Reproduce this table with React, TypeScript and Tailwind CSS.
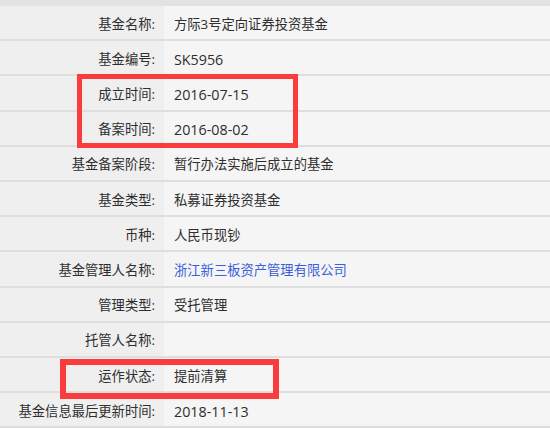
const rows: { label: string; value: string; link?: boolean; latin?: boolean }[] = [
  { label: "基金名称:", value: "方际3号定向证券投资基金" },
  { label: "基金编号:", value: "SK5956", latin: true },
  { label: "成立时间:", value: "2016-07-15", latin: true },
  { label: "备案时间:", value: "2016-08-02", latin: true },
  { label: "基金备案阶段:", value: "暂行办法实施后成立的基金" },
  { label: "基金类型:", value: "私募证券投资基金" },
  { label: "币种:", value: "人民币现钞" },
  { label: "基金管理人名称:", value: "浙江新三板资产管理有限公司", link: true },
  { label: "管理类型:", value: "受托管理" },
  { label: "托管人名称:", value: "" },
  { label: "运作状态:", value: "提前清算" },
  { label: "基金信息最后更新时间:", value: "2018-11-13", latin: true },
];

export default function App() {
  return (
    <div
      className="relative w-[550px] h-[428px] overflow-hidden bg-[#f5f5f5] text-[13.3px] text-[#2e2e2e]"
      style={{ fontFamily: '"Open Sans", "Noto Sans CJK SC", sans-serif' }}
    >
      <div className="h-[6px] bg-[#e2e2e2]" />
      {rows.map((r) => (
        <div key={r.label} className="flex h-[35.2px] border-b-2 border-[#dedede]">
          <div className="w-[164px] shrink-0 bg-[#efefef] flex items-center justify-end pr-[9px] pt-[4px]">
            {r.label}
          </div>
          <div className="flex-1 flex items-center pl-[10px] pt-[4px]">
            {r.link ? (
              <a className="text-[#3b5fd9]">{r.value}</a>
            ) : (
              <span className={r.latin ? "text-[14.3px]" : ""}>{r.value}</span>
            )}
          </div>
        </div>
      ))}

      {/* annotation boxes */}
      <div className="absolute left-[77px] top-[74px] w-[221px] h-[74px] border-[5px] border-[#fa3c3c]" />
      <div className="absolute left-[60px] top-[359px] w-[219px] h-[40px] border-[6px] border-[#fa3c3c]" />
    </div>
  );
}
